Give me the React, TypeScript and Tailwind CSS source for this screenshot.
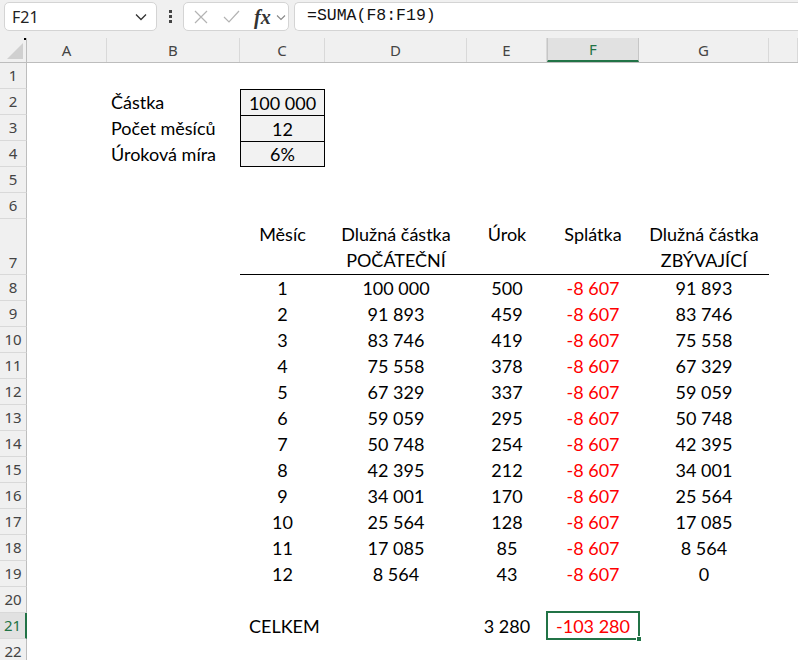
import React from "react";

const cols = ["A", "B", "C", "D", "E", "F", "G", ""];
const widths = ["w-[80px]", "w-[133px]", "w-[85px]", "w-[142px]", "w-[80px]", "w-[92px]", "w-[130px]", "flex-1"];

const data: [string, string, string, string, string][] = [
  ["1", "100 000", "500", "-8 607", "91 893"],
  ["2", "91 893", "459", "-8 607", "83 746"],
  ["3", "83 746", "419", "-8 607", "75 558"],
  ["4", "75 558", "378", "-8 607", "67 329"],
  ["5", "67 329", "337", "-8 607", "59 059"],
  ["6", "59 059", "295", "-8 607", "50 748"],
  ["7", "50 748", "254", "-8 607", "42 395"],
  ["8", "42 395", "212", "-8 607", "34 001"],
  ["9", "34 001", "170", "-8 607", "25 564"],
  ["10", "25 564", "128", "-8 607", "17 085"],
  ["11", "17 085", "85", "-8 607", "8 564"],
  ["12", "8 564", "43", "-8 607", "0"],
];

const cellFont = { fontFamily: "Lato, 'Open Sans', sans-serif" };
const uiFont = { fontFamily: "'Noto Sans', 'Open Sans', sans-serif" };

function RowHead({ n, active = false, tall = false }: { n: number; active?: boolean; tall?: boolean }) {
  return (
    <div
      className={`w-[27px] shrink-0 flex justify-center border-b border-[#d9d9d9] text-[15px] ${
        tall ? "items-end pb-[1px]" : "items-center"
      } ${
        active
          ? "bg-[#e1e1e1] text-[#217346] border-r-2 border-r-[#217346]"
          : "bg-[#f0f0f0] text-[#444] border-r border-r-[#bdbdbd]"
      }`}
      style={uiFont}
    >
      {n}
    </div>
  );
}

// cells: array of 8 nodes (A..H)
function Row({
  n,
  cells,
  tall = false,
  active = false,
  classes = [],
}: {
  n: number;
  cells?: React.ReactNode[];
  tall?: boolean;
  active?: boolean;
  classes?: string[];
}) {
  return (
    <div className={`flex ${tall ? "h-[56px]" : "h-[26px]"}`}>
      <RowHead n={n} active={active} tall={tall} />
      {widths.map((w, i) => (
        <div key={i} className={`${w} shrink-0 relative text-[18px] text-black ${classes[i] ?? ""}`} style={cellFont}>
          {cells?.[i]}
        </div>
      ))}
    </div>
  );
}

function Center({ children, red = false }: { children: React.ReactNode; red?: boolean }) {
  return (
    <div className={`h-full flex items-center justify-center pt-[1px] ${red ? "text-[#ff0000]" : ""}`}>{children}</div>
  );
}

function Left({ children }: { children: React.ReactNode }) {
  return <div className="h-full flex items-center pl-[4px] pt-[1px]">{children}</div>;
}

function Head2({ a, b }: { a: string; b?: string }) {
  return (
    <div className="h-full flex flex-col items-center pt-[2px] leading-[26px]">
      <span>{a}</span>
      <span>{b ?? "\u00a0"}</span>
    </div>
  );
}

export default function App() {
  const boxed = (last = false) =>
    `bg-[#f2f2f2] border-x border-t border-black ${last ? "border-b" : ""}`;

  return (
    <div className="w-[798px] h-[660px] overflow-hidden bg-white">
      {/* formula bar */}
      <div className="h-[38px] bg-[#f0f0f0] flex items-start pt-[2px] pl-[4px]">
        <div className="w-[153px] h-[29px] bg-white border border-[#d4d4d4] rounded-[5px] flex items-center justify-between pl-[7px] pr-[9px]">
          <span className="text-[16px] text-[#222]" style={uiFont}>F21</span>
          <svg width="12" height="8" viewBox="0 0 12 8" fill="none" stroke="#333" strokeWidth="1.3">
            <path d="M1 1.5 L6 6.5 L11 1.5" />
          </svg>
        </div>
        <div className="w-[26px] h-[29px] flex flex-col items-center justify-center gap-[2px]">
          <div className="w-[3px] h-[3px] bg-[#444]" />
          <div className="w-[3px] h-[3px] bg-[#444]" />
          <div className="w-[3px] h-[3px] bg-[#444]" />
        </div>
        <div className="w-[106px] h-[29px] bg-white border border-[#d4d4d4] rounded-[5px] flex items-center pl-[10px]">
          <svg width="14" height="14" viewBox="0 0 14 14" stroke="#b3b3b3" strokeWidth="1.2" fill="none">
            <path d="M1 1 L13 13 M13 1 L1 13" />
          </svg>
          <svg className="ml-[15px]" width="17" height="13" viewBox="0 0 17 13" stroke="#b3b3b3" strokeWidth="1.2" fill="none">
            <path d="M1 7 L6 12 L16 1" />
          </svg>
          <span
            className="ml-[14px] text-[20px] italic font-bold text-[#333] leading-none"
            style={{ fontFamily: "'Liberation Serif', serif" }}
          >
            fx
          </span>
          <svg className="ml-[5px] mt-[2px]" width="10" height="7" viewBox="0 0 10 7" fill="none" stroke="#888" strokeWidth="1.1">
            <path d="M1 1.5 L5 5.5 L9 1.5" />
          </svg>
        </div>
        <div className="ml-[5px] flex-1 h-[29px] bg-white border border-[#d4d4d4] border-r-0 rounded-l-[5px] flex items-center pl-[12px]">
          <span className="text-[16.5px] text-[#111]" style={{ fontFamily: "'Liberation Mono', monospace" }}>
            =SUMA(F8:F19)
          </span>
        </div>
      </div>

      {/* column headers */}
      <div className="flex h-[25px] bg-[#f0f0f0] border-b border-[#bdbdbd]">
        <div className="w-[27px] shrink-0 relative border-r border-[#bdbdbd]">
          <div className="absolute right-[0px] top-0 w-[2px] h-[2px] bg-black" />
          <svg className="absolute right-[3px] bottom-[3px]" width="16" height="16" viewBox="0 0 16 16">
            <path d="M16 0 L16 16 L0 16 Z" fill="#d0d0d0" />
          </svg>
        </div>
        {cols.map((c, i) => (
          <div
            key={i}
            className={`${widths[i]} shrink-0 flex items-center justify-center text-[15px] ${
              c === "F"
                ? "bg-[#e1e1e1] text-[#217346] border-b-2 border-[#217346] border-x border-x-[#c6c6c6]"
                : "text-[#444] border-r border-[#d9d9d9]"
            }`}
            style={uiFont}
          >
            {c}
          </div>
        ))}
      </div>

      {/* sheet */}
      <Row n={1} />
      <Row
        n={2}
        cells={[null, <Left>Částka</Left>, <Center>100 000</Center>]}
        classes={["", "", boxed()]}
      />
      <Row
        n={3}
        cells={[null, <Left>Počet měsíců</Left>, <Center>12</Center>]}
        classes={["", "", boxed()]}
      />
      <Row
        n={4}
        cells={[null, <Left>Úroková míra</Left>, <Center>6%</Center>]}
        classes={["", "", boxed(true)]}
      />
      <Row n={5} />
      <Row n={6} />
      <Row
        n={7}
        tall
        cells={[
          null,
          null,
          <Head2 a="Měsíc" />,
          <Head2 a="Dlužná částka" b="POČÁTEČNÍ" />,
          <Head2 a="Úrok" />,
          <Head2 a="Splátka" />,
          <Head2 a="Dlužná částka" b="ZBÝVAJÍCÍ" />,
        ]}
        classes={["", "", "border-b border-black", "border-b border-black", "border-b border-black", "border-b border-black", "border-b border-black"]}
      />
      {data.map((r, i) => (
        <Row
          key={i}
          n={8 + i}
          cells={[
            null,
            null,
            <Center>{r[0]}</Center>,
            <Center>{r[1]}</Center>,
            <Center>{r[2]}</Center>,
            <Center red>{r[3]}</Center>,
            <Center>{r[4]}</Center>,
          ]}
        />
      ))}
      <Row n={20} />
      <Row
        n={21}
        active
        cells={[
          null,
          null,
          <Left>
            <span className="pl-[5px]">CELKEM</span>
          </Left>,
          null,
          <Center>3 280</Center>,
          <>
            <Center red>-103 280</Center>
            <div className="absolute -left-[1px] -top-[2px] -right-[1px] -bottom-[1px] border-2 border-[#217346]" />
            <div className="absolute -right-[3px] -bottom-[3px] w-[6px] h-[6px] bg-[#217346] border border-white" />
          </>,
        ]}
      />
      <Row n={22} />
    </div>
  );
}
